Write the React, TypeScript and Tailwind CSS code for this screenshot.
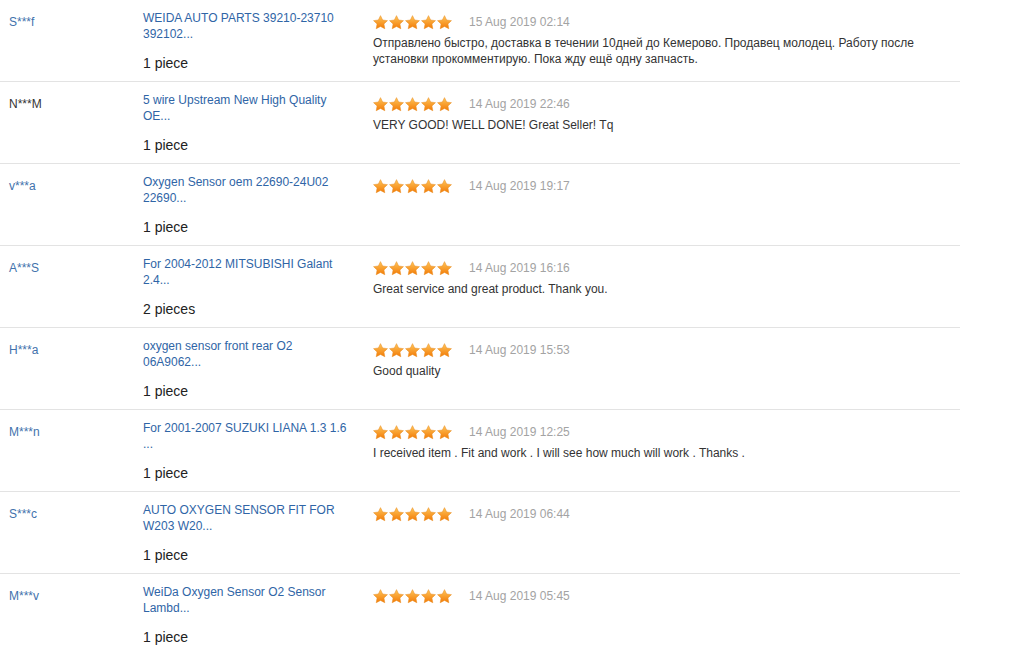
type Review = {
  user: string
  dark?: boolean
  title: [string, string]
  qty: string
  date: string
  text?: string[]
}

const reviews: Review[] = [
  {
    user: 'S***f',
    title: ['WEIDA AUTO PARTS 39210-23710', '392102...'],
    qty: '1 piece',
    date: '15 Aug 2019 02:14',
    text: [
      'Отправлено быстро, доставка в течении 10дней до Кемерово. Продавец молодец. Работу после',
      'установки прокомментирую. Пока жду ещё одну запчасть.',
    ],
  },
  {
    user: 'N***M',
    dark: true,
    title: ['5 wire Upstream New High Quality', 'OE...'],
    qty: '1 piece',
    date: '14 Aug 2019 22:46',
    text: ['VERY GOOD! WELL DONE! Great Seller! Tq'],
  },
  {
    user: 'v***a',
    title: ['Oxygen Sensor oem 22690-24U02', '22690...'],
    qty: '1 piece',
    date: '14 Aug 2019 19:17',
  },
  {
    user: 'A***S',
    title: ['For 2004-2012 MITSUBISHI Galant', '2.4...'],
    qty: '2 pieces',
    date: '14 Aug 2019 16:16',
    text: ['Great service and great product. Thank you.'],
  },
  {
    user: 'H***a',
    title: ['oxygen sensor front rear O2', '06A9062...'],
    qty: '1 piece',
    date: '14 Aug 2019 15:53',
    text: ['Good quality'],
  },
  {
    user: 'M***n',
    title: ['For 2001-2007 SUZUKI LIANA 1.3 1.6', '...'],
    qty: '1 piece',
    date: '14 Aug 2019 12:25',
    text: ['I received item . Fit and work . I will see how much will work . Thanks .'],
  },
  {
    user: 'S***c',
    title: ['AUTO OXYGEN SENSOR FIT FOR', 'W203 W20...'],
    qty: '1 piece',
    date: '14 Aug 2019 06:44',
  },
  {
    user: 'M***v',
    title: ['WeiDa Oxygen Sensor O2 Sensor', 'Lambd...'],
    qty: '1 piece',
    date: '14 Aug 2019 05:45',
  },
]

function Star() {
  return (
    <svg width="15" height="15" viewBox="0 0 24 24" className="block">
      <defs>
        <linearGradient id="starFill" x1="0" y1="0" x2="0" y2="1">
          <stop offset="0" stopColor="#ffc65a" />
          <stop offset="1" stopColor="#f27a06" />
        </linearGradient>
      </defs>
      <path
        d="M12 1l3.4 7 7.7 1-5.6 5.3 1.4 7.7L12 18.3l-6.9 3.7 1.4-7.7L0.9 9l7.7-1z"
        fill="url(#starFill)"
        stroke="#e98a1c"
        strokeWidth="0.8"
        strokeLinejoin="round"
      />
    </svg>
  )
}

function Row({review}: {review: Review}) {
  return (
    <div className="flex h-[82px] w-[960px] border-b border-[#e3e3e3]">
      <div
        className={`w-[143px] shrink-0 pl-[9px] pt-[14px] text-[12px] leading-4 ${
          review.dark ? 'text-[#333]' : 'text-[#4272ac]'
        }`}
      >
        {review.user}
      </div>

      <div className="w-[230px] shrink-0 pt-[10px]">
        <div className="text-[12px] leading-4 text-[#2f65a6]">
          {review.title[0]}
          <br />
          {review.title[1]}
        </div>
        <div className="mt-[12px] text-[14px] leading-[18px] text-[#222]">{review.qty}</div>
      </div>

      <div className="pt-[14px]">
        <div className="flex h-4 items-center">
          <div className="flex gap-[1px]">
            <Star />
            <Star />
            <Star />
            <Star />
            <Star />
          </div>
          <span className="ml-[17px] text-[12px] leading-4 text-[#a3a3a3]">{review.date}</span>
        </div>
        {review.text && (
          <div className="mt-[5px] text-[12px] leading-4 text-[#333]">
            {review.text.map((line, i) => (
              <div key={i}>{line}</div>
            ))}
          </div>
        )}
      </div>
    </div>
  )
}

export default function App() {
  return (
    <div className="h-[649px] w-[1027px] overflow-hidden bg-white font-['Liberation_Sans',Arial,sans-serif]">
      {reviews.map((r) => (
        <Row key={r.user + r.date} review={r} />
      ))}
    </div>
  )
}
